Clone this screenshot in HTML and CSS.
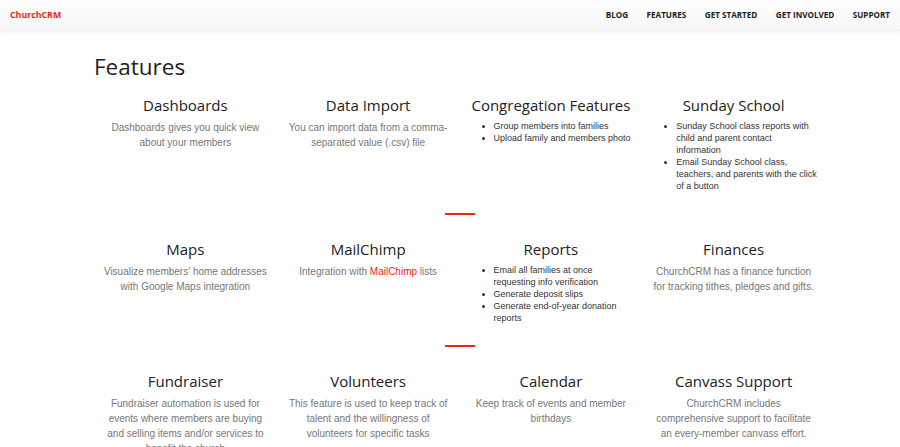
FILE: index.html
```html
<!DOCTYPE html>
<html>

<head lang="en">
    <meta charset="UTF-8">
    <title>ChurchCRM Features</title>
    <link rel="stylesheet" href="styles.css">
</head>

<body>
    <div class="navbar">
        <a class="brand" href="#">ChurchCRM</a>
        <ul class="nav">
            <li><a href="#">Blog</a></li>
            <li><a href="#">Features</a></li>
            <li><a href="#">Get Started</a></li>
            <li><a href="#">Get Involved</a></li>
            <li><a href="#">Support</a></li>
        </ul>
    </div>

    <div class="container">
        <h1 class="title">Features</h1>

        <div class="row">
            <div class="feature">
                <h3>Dashboards</h3>
                <p>Dashboards gives you quick view about your members</p>
            </div>
            <div class="feature">
                <h3>Data Import</h3>
                <p>You can import data from a comma-separated value (.csv) file</p>
            </div>
            <div class="feature">
                <h3>Congregation Features</h3>
                <ul>
                    <li>Group members into families</li>
                    <li>Upload family and members photo</li>
                </ul>
            </div>
            <div class="feature">
                <h3>Sunday School</h3>
                <ul>
                    <li>Sunday School class reports with child and parent contact information</li>
                    <li>Email Sunday School class, teachers, and parents with the click of a button</li>
                </ul>
            </div>
        </div>

        <div class="divider"></div>

        <div class="row">
            <div class="feature">
                <h3>Maps</h3>
                <p>Visualize members' home addresses with Google Maps integration</p>
            </div>
            <div class="feature">
                <h3>MailChimp</h3>
                <p>Integration with <a href="#">MailChimp</a> lists</p>
            </div>
            <div class="feature">
                <h3>Reports</h3>
                <ul>
                    <li>Email all families at once requesting info verification</li>
                    <li>Generate deposit slips</li>
                    <li>Generate end-of-year donation reports</li>
                </ul>
            </div>
            <div class="feature">
                <h3>Finances</h3>
                <p>ChurchCRM has a finance function for tracking tithes, pledges and gifts.</p>
            </div>
        </div>

        <div class="divider"></div>

        <div class="row">
            <div class="feature">
                <h3>Fundraiser</h3>
                <p>Fundraiser automation is used for events where members are buying and selling items and/or services to benefit the church</p>
            </div>
            <div class="feature">
                <h3>Volunteers</h3>
                <p>This feature is used to keep track of talent and the willingness of volunteers for specific tasks</p>
            </div>
            <div class="feature">
                <h3>Calendar</h3>
                <p>Keep track of events and member birthdays</p>
            </div>
            <div class="feature">
                <h3>Canvass Support</h3>
                <p>ChurchCRM includes comprehensive support to facilitate an every-member canvass effort.</p>
            </div>
        </div>
    </div>
</body>

</html>
```

FILE: styles.css
```css
* {
    margin: 0;
    padding: 0;
}

body {
    width: 100%;
    background-color: #fff;
    font-family: "Liberation Sans", Arial, sans-serif;
}

a {
    text-decoration: none;
}

.navbar {
    display: flex;
    justify-content: space-between;
    align-items: center;
    height: 30px;
    padding: 0 10px;
    background: linear-gradient(#fff, #f7f7f7);
    box-shadow: 0 1px 3px rgba(0, 0, 0, 0.06);
    border-bottom: 1px solid #f1f1f1;
}

.brand {
    color: #f2260f;
    font-family: "Open Sans", sans-serif;
    font-weight: bold;
    font-size: 8.8px;
    line-height: 12px;
}

.nav {
    display: flex;
    list-style: none;
    gap: 18.5px;
    font-size: 8.1px;
    line-height: 12px;
}

.nav a {
    color: #222;
    font-family: "Open Sans", sans-serif;
    font-weight: bold;
    text-transform: uppercase;
}

.container {
    width: 731px;
    margin-left: 94px;
}

.title {
    font-family: "Open Sans", sans-serif;
    font-weight: normal;
    font-size: 22.5px;
    line-height: 30px;
    color: #222;
    margin-top: 21px;
    margin-bottom: 12px;
}

.row {
    display: grid;
    grid-template-columns: repeat(4, 1fr);
}

.feature {
    padding: 0 9px;
    text-align: center;
}

.feature h3 {
    font-family: "Open Sans", sans-serif;
    font-weight: normal;
    font-size: 15px;
    line-height: 22px;
    color: #222;
    margin-bottom: 4px;
}

.feature p {
    font-size: 10px;
    line-height: 15px;
    color: #777;
}

.feature p a {
    color: #f2260f;
}

.feature ul {
    text-align: left;
    padding-left: 25px;
    margin-right: -2px;
    font-size: 9px;
    line-height: 12px;
    color: #333;
}

.divider {
    width: 30px;
    height: 2px;
    background-color: #f2260f;
    margin: 21px auto 23px;
}
```
